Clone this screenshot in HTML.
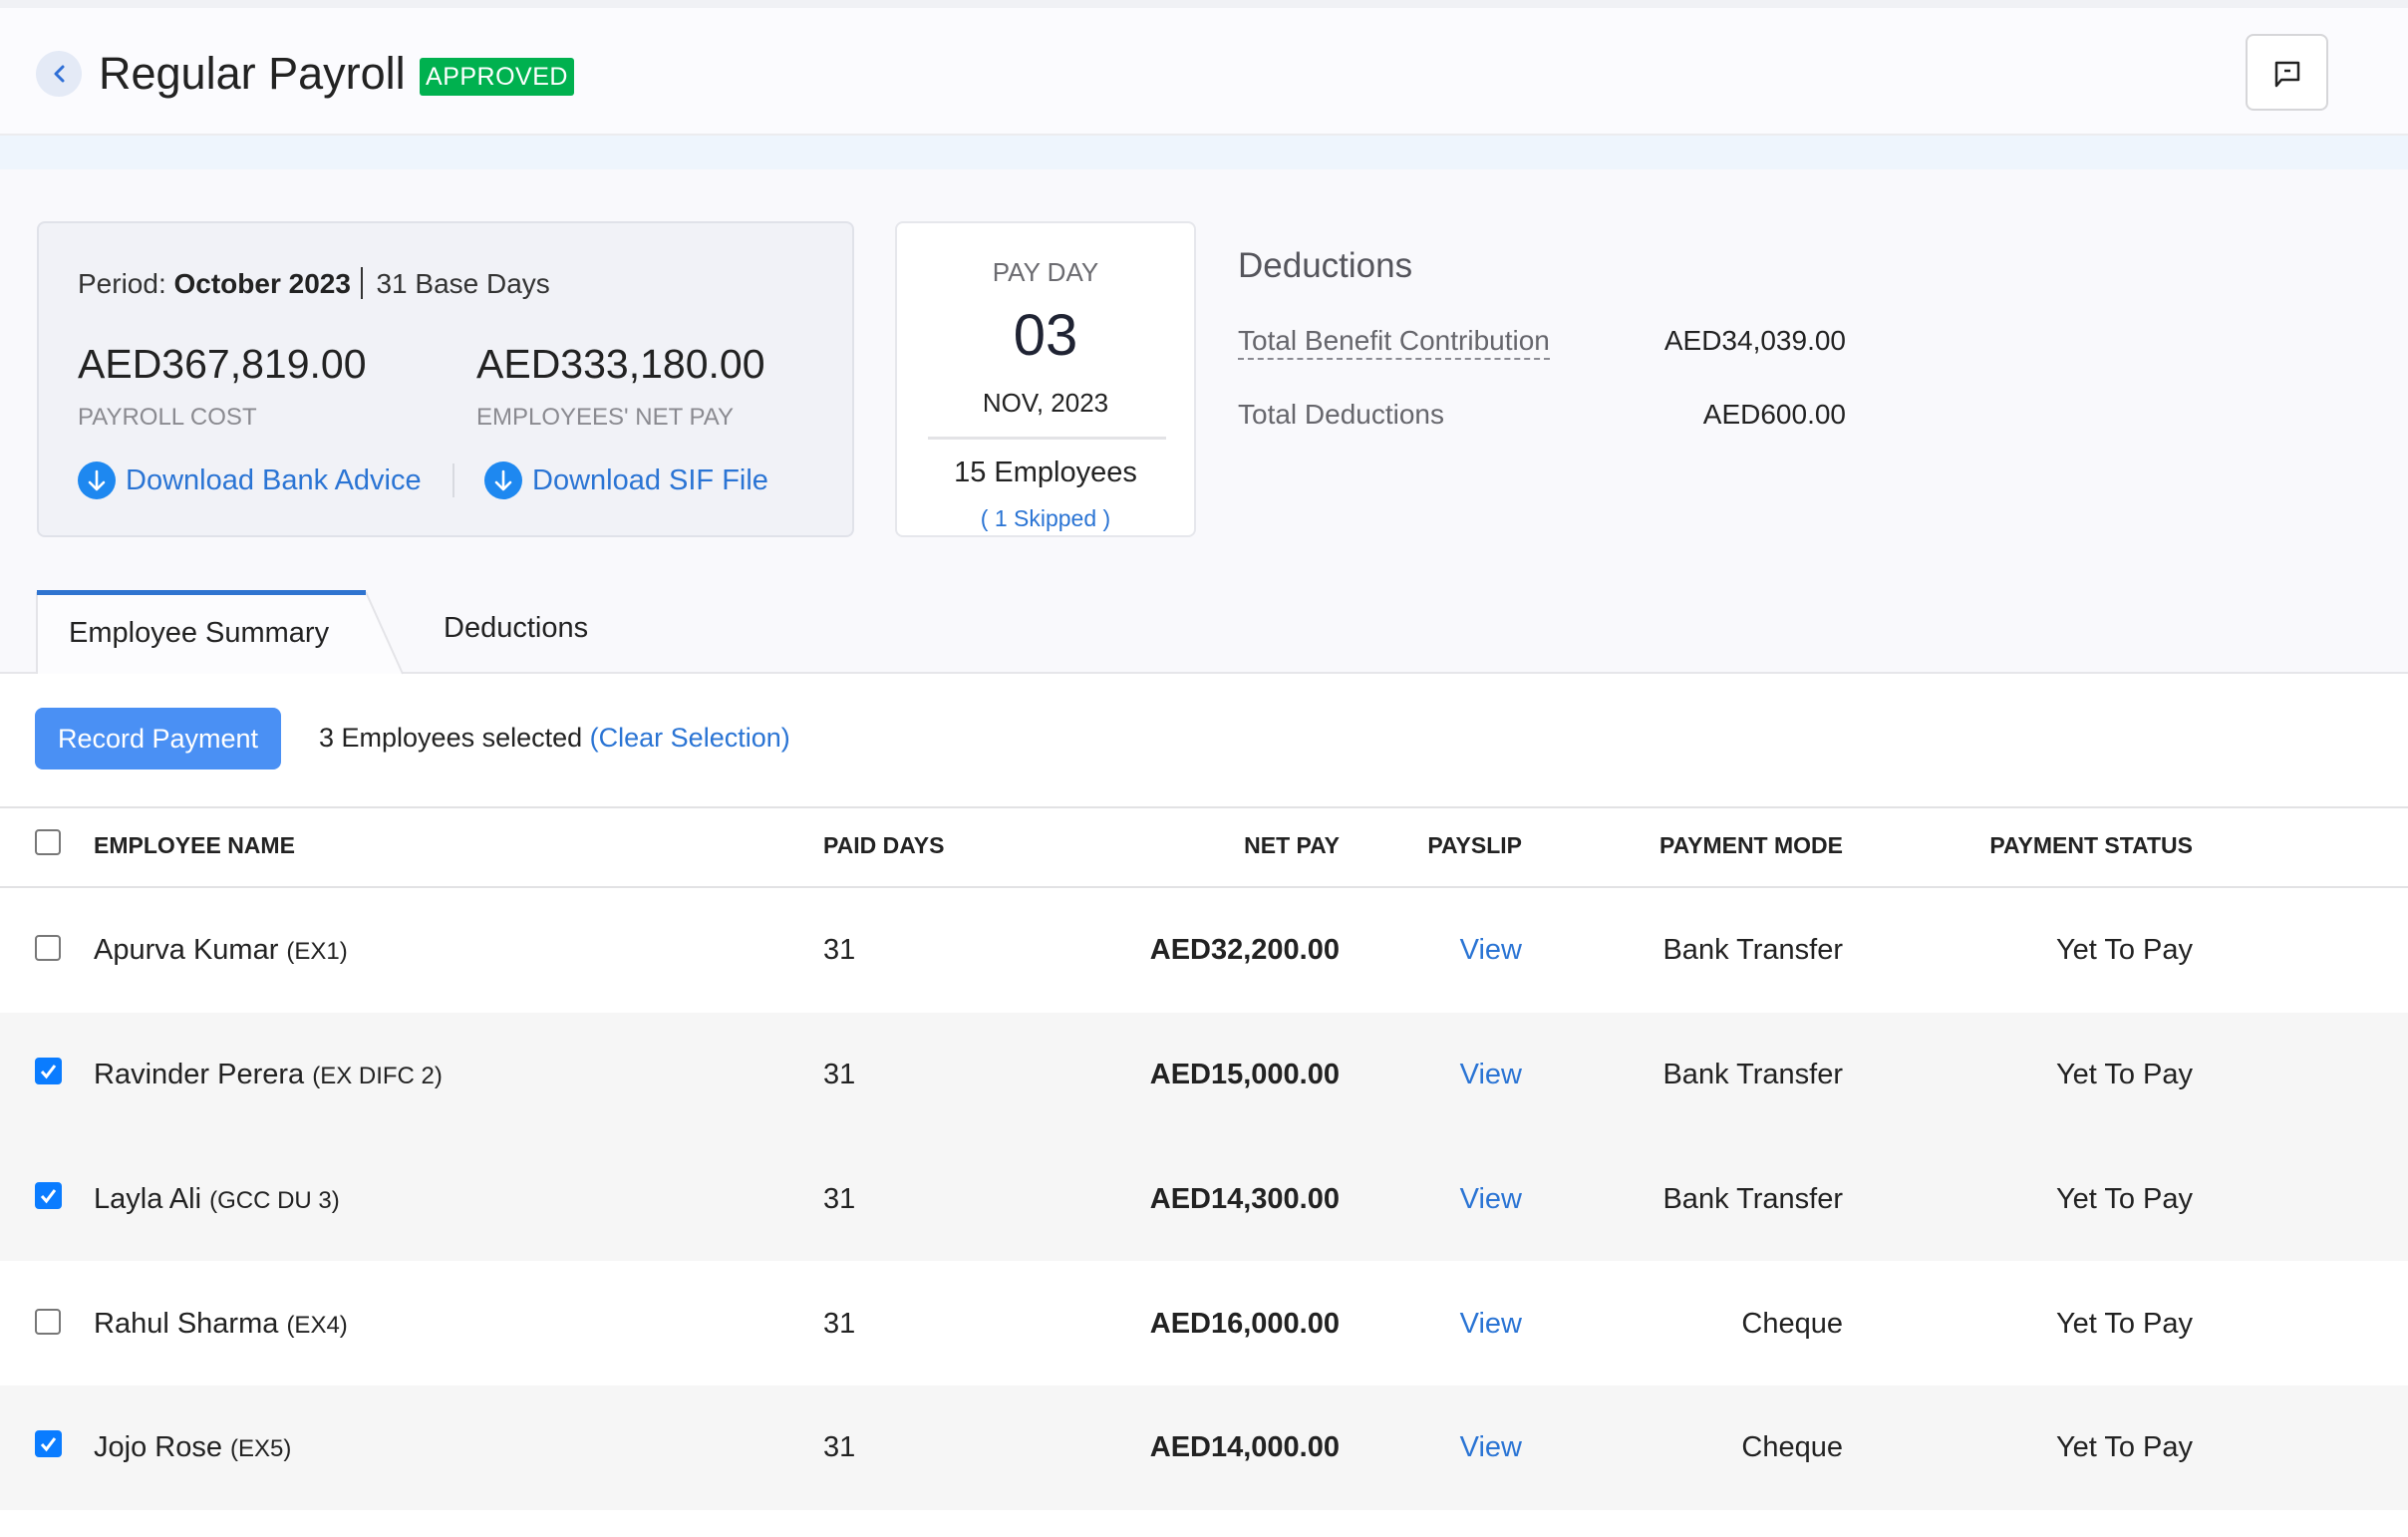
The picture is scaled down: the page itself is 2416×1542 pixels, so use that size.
<!DOCTYPE html>
<html><head><meta charset="utf-8"><style>
*{margin:0;padding:0;box-sizing:border-box}
body{width:2416px;height:1542px;position:relative;overflow:hidden;background:#fff;font-family:"Liberation Sans",Arial,sans-serif;color:#222}
.a{position:absolute;white-space:nowrap}
.r{text-align:right}
</style></head><body>
<div class="a" style="left:0;top:0;width:2416px;height:8px;background:#f0f1f5"></div>
<div class="a" style="left:0;top:8px;width:2416px;height:128px;background:#fbfbfe;border-bottom:2px solid #ececef"></div>
<div class="a" style="left:0;top:136px;width:2416px;height:34px;background:#eef5fd"></div>
<div class="a" style="left:0;top:170px;width:2416px;height:505px;background:#f9f9fc"></div>

<div class="a" style="left:36px;top:51px;width:46px;height:46px;border-radius:50%;background:#e4eaf6"></div>
<svg class="a" style="left:48px;top:62px" width="24" height="24" viewBox="0 0 24 24"><path d="M15 5 L8 12 L15 19" fill="none" stroke="#2f6fd6" stroke-width="3" stroke-linecap="round" stroke-linejoin="round"/></svg>
<div class="a" style="left:99px;top:46px;line-height:56px;font-size:45px;color:#222">Regular Payroll</div>
<div class="a" style="left:421px;top:58px;width:155px;height:38px;background:#00b14f;border-radius:3px;color:#fff;font-size:25px;line-height:38px;text-align:center;letter-spacing:0.5px">APPROVED</div>

<div class="a" style="left:2253px;top:34px;width:83px;height:77px;background:#fff;border:2px solid #d6d6d9;border-radius:8px"></div>
<svg class="a" style="left:2277px;top:56px" width="36" height="36" viewBox="0 0 36 36"><path d="M7 7 H29 V24 H12 L7 30 Z" fill="none" stroke="#222" stroke-width="2.5" stroke-linejoin="round"/><path d="M15 15 H21" stroke="#222" stroke-width="2.5"/></svg>

<div class="a" style="left:37px;top:222px;width:820px;height:317px;background:#f1f2f7;border:2px solid #e0e2e9;border-radius:8px"></div>
<div class="a" style="left:78px;top:268px;line-height:34px;font-size:28px;color:#333">Period: <b style="font-weight:600;color:#222">October 2023</b> <span style="display:inline-block;width:2px;height:32px;background:#333;vertical-align:-6px;margin:0 6px 0 2px"></span> 31 Base Days</div>
<div class="a" style="left:78px;top:340px;line-height:50px;font-size:41px;color:#222">AED367,819.00</div>
<div class="a" style="left:478px;top:340px;line-height:50px;font-size:41px;color:#222">AED333,180.00</div>
<div class="a" style="left:78px;top:405px;line-height:28px;font-size:24px;color:#8a8a90">PAYROLL COST</div>
<div class="a" style="left:478px;top:405px;line-height:28px;font-size:24px;color:#8a8a90">EMPLOYEES' NET PAY</div>
<svg class="a" style="left:78px;top:463px" width="38" height="38" viewBox="0 0 38 38"><circle cx="19" cy="19" r="19" fill="#1e88f0"/><path d="M19 10 V27 M12 21 L19 28 L26 21" fill="none" stroke="#fff" stroke-width="2.6" stroke-linecap="round" stroke-linejoin="round"/></svg>
<div class="a" style="left:126px;top:464px;line-height:36px;font-size:29px;color:#2a74d4">Download Bank Advice</div>
<div class="a" style="left:454px;top:465px;width:2px;height:34px;background:#d8dae0"></div>
<svg class="a" style="left:486px;top:463px" width="38" height="38" viewBox="0 0 38 38"><circle cx="19" cy="19" r="19" fill="#1e88f0"/><path d="M19 10 V27 M12 21 L19 28 L26 21" fill="none" stroke="#fff" stroke-width="2.6" stroke-linecap="round" stroke-linejoin="round"/></svg>
<div class="a" style="left:534px;top:464px;line-height:36px;font-size:29px;color:#2a74d4">Download SIF File</div>

<div class="a" style="left:898px;top:222px;width:302px;height:317px;background:#fff;border:2px solid #e6e7ec;border-radius:8px"></div>
<div class="a" style="left:898px;width:302px;text-align:center;top:258px;line-height:30px;font-size:26px;color:#6b6b70">PAY DAY</div>
<div class="a" style="left:898px;width:302px;text-align:center;top:303px;line-height:68px;font-size:58px;color:#1f2333">03</div>
<div class="a" style="left:898px;width:302px;text-align:center;top:389px;line-height:30px;font-size:26px;color:#222">NOV, 2023</div>
<div class="a" style="left:931px;top:438px;width:239px;height:3px;background:#e3e3e6"></div>
<div class="a" style="left:898px;width:302px;text-align:center;top:457px;line-height:34px;font-size:29px;color:#222">15 Employees</div>
<div class="a" style="left:898px;width:302px;text-align:center;top:506px;line-height:28px;font-size:23px;color:#2a74d4">( 1 Skipped )</div>

<div class="a" style="left:1242px;top:246px;line-height:42px;font-size:35px;color:#55555c">Deductions</div>
<div class="a" style="left:1242px;top:325px;line-height:34px;font-size:28px;color:#66666c;border-bottom:2px dashed #8a8a92">Total Benefit Contribution</div>
<div class="a r" style="right:564px;top:325px;line-height:34px;font-size:28px;color:#222">AED34,039.00</div>
<div class="a" style="left:1242px;top:399px;line-height:34px;font-size:28px;color:#66666c">Total Deductions</div>
<div class="a r" style="right:564px;top:399px;line-height:34px;font-size:28px;color:#222">AED600.00</div>

<div class="a" style="left:0;top:674px;width:2416px;height:2px;background:#e6e6ea"></div>
<svg class="a" style="left:0;top:590px" width="420" height="90"><polygon points="37,4 367,4 404,86 37,86" fill="#fcfcfe"/><path d="M37,86 L37,4 M367,4 L404,86" stroke="#e4e4e8" stroke-width="2" fill="none"/><rect x="37" y="2" width="330" height="5" fill="#2f74d0"/></svg>
<div class="a" style="left:69px;top:617px;line-height:36px;font-size:29px;color:#222">Employee Summary</div>
<div class="a" style="left:445px;top:612px;line-height:36px;font-size:29px;color:#222">Deductions</div>

<div class="a" style="left:35px;top:710px;width:247px;height:62px;background:#4a90f4;border-radius:8px;color:#fff;font-size:27px;line-height:62px;text-align:center">Record Payment</div>
<div class="a" style="left:320px;top:723px;line-height:34px;font-size:27px;color:#222">3 Employees selected <span style="color:#2a74d4">(Clear Selection)</span></div>

<div class="a" style="left:0;top:809px;width:2416px;height:2px;background:#e2e2e4"></div>
<div class="a" style="left:0;top:889px;width:2416px;height:2px;background:#e2e2e4"></div>
<div class="a" style="left:0;top:1016px;width:2416px;height:249px;background:#f6f6f6"></div>
<div class="a" style="left:0;top:1390px;width:2416px;height:125px;background:#f6f6f6"></div>

<div class="a" style="left:35px;top:832px;width:26px;height:26px;border:2px solid #777;border-radius:4px;background:#fff"></div>
<div class="a" style="left:94px;top:834px;line-height:28px;font-size:23px;font-weight:bold;color:#222">EMPLOYEE NAME</div>
<div class="a" style="left:826px;top:834px;line-height:28px;font-size:23px;font-weight:bold;color:#222">PAID DAYS</div>
<div class="a r" style="right:1072px;top:834px;line-height:28px;font-size:23px;font-weight:bold;color:#222">NET PAY</div>
<div class="a r" style="right:889px;top:834px;line-height:28px;font-size:23px;font-weight:bold;color:#222">PAYSLIP</div>
<div class="a r" style="right:567px;top:834px;line-height:28px;font-size:23px;font-weight:bold;color:#222">PAYMENT MODE</div>
<div class="a r" style="right:216px;top:834px;line-height:28px;font-size:23px;font-weight:bold;color:#222">PAYMENT STATUS</div>

<div class="a" style="left:35px;top:938px;width:26px;height:26px;border:2px solid #777;border-radius:4px;background:#fff"></div>
<div class="a" style="left:94px;top:935px;line-height:36px;font-size:29px">Apurva Kumar <span style="font-size:24px">(EX1)</span></div>
<div class="a" style="left:826px;top:935px;line-height:36px;font-size:29px">31</div>
<div class="a r" style="right:1072px;top:935px;line-height:36px;font-size:29px;font-weight:bold">AED32,200.00</div>
<div class="a r" style="right:889px;top:935px;line-height:36px;font-size:29px;color:#2a74d4">View</div>
<div class="a r" style="right:567px;top:935px;line-height:36px;font-size:29px">Bank Transfer</div>
<div class="a r" style="right:216px;top:935px;line-height:36px;font-size:29px">Yet To Pay</div>

<svg class="a" style="left:35px;top:1061px" width="27" height="27"><rect width="27" height="27" rx="4" fill="#0a7cff"/><path d="M7 14 L11.5 19 L20 8" fill="none" stroke="#fff" stroke-width="3"/></svg>
<div class="a" style="left:94px;top:1060px;line-height:36px;font-size:29px">Ravinder Perera <span style="font-size:24px">(EX DIFC 2)</span></div>
<div class="a" style="left:826px;top:1060px;line-height:36px;font-size:29px">31</div>
<div class="a r" style="right:1072px;top:1060px;line-height:36px;font-size:29px;font-weight:bold">AED15,000.00</div>
<div class="a r" style="right:889px;top:1060px;line-height:36px;font-size:29px;color:#2a74d4">View</div>
<div class="a r" style="right:567px;top:1060px;line-height:36px;font-size:29px">Bank Transfer</div>
<div class="a r" style="right:216px;top:1060px;line-height:36px;font-size:29px">Yet To Pay</div>

<svg class="a" style="left:35px;top:1186px" width="27" height="27"><rect width="27" height="27" rx="4" fill="#0a7cff"/><path d="M7 14 L11.5 19 L20 8" fill="none" stroke="#fff" stroke-width="3"/></svg>
<div class="a" style="left:94px;top:1185px;line-height:36px;font-size:29px">Layla Ali <span style="font-size:24px">(GCC DU 3)</span></div>
<div class="a" style="left:826px;top:1185px;line-height:36px;font-size:29px">31</div>
<div class="a r" style="right:1072px;top:1185px;line-height:36px;font-size:29px;font-weight:bold">AED14,300.00</div>
<div class="a r" style="right:889px;top:1185px;line-height:36px;font-size:29px;color:#2a74d4">View</div>
<div class="a r" style="right:567px;top:1185px;line-height:36px;font-size:29px">Bank Transfer</div>
<div class="a r" style="right:216px;top:1185px;line-height:36px;font-size:29px">Yet To Pay</div>

<div class="a" style="left:35px;top:1313px;width:26px;height:26px;border:2px solid #777;border-radius:4px;background:#fff"></div>
<div class="a" style="left:94px;top:1310px;line-height:36px;font-size:29px">Rahul Sharma <span style="font-size:24px">(EX4)</span></div>
<div class="a" style="left:826px;top:1310px;line-height:36px;font-size:29px">31</div>
<div class="a r" style="right:1072px;top:1310px;line-height:36px;font-size:29px;font-weight:bold">AED16,000.00</div>
<div class="a r" style="right:889px;top:1310px;line-height:36px;font-size:29px;color:#2a74d4">View</div>
<div class="a r" style="right:567px;top:1310px;line-height:36px;font-size:29px">Cheque</div>
<div class="a r" style="right:216px;top:1310px;line-height:36px;font-size:29px">Yet To Pay</div>

<svg class="a" style="left:35px;top:1435px" width="27" height="27"><rect width="27" height="27" rx="4" fill="#0a7cff"/><path d="M7 14 L11.5 19 L20 8" fill="none" stroke="#fff" stroke-width="3"/></svg>
<div class="a" style="left:94px;top:1434px;line-height:36px;font-size:29px">Jojo Rose <span style="font-size:24px">(EX5)</span></div>
<div class="a" style="left:826px;top:1434px;line-height:36px;font-size:29px">31</div>
<div class="a r" style="right:1072px;top:1434px;line-height:36px;font-size:29px;font-weight:bold">AED14,000.00</div>
<div class="a r" style="right:889px;top:1434px;line-height:36px;font-size:29px;color:#2a74d4">View</div>
<div class="a r" style="right:567px;top:1434px;line-height:36px;font-size:29px">Cheque</div>
<div class="a r" style="right:216px;top:1434px;line-height:36px;font-size:29px">Yet To Pay</div>
</body></html>
